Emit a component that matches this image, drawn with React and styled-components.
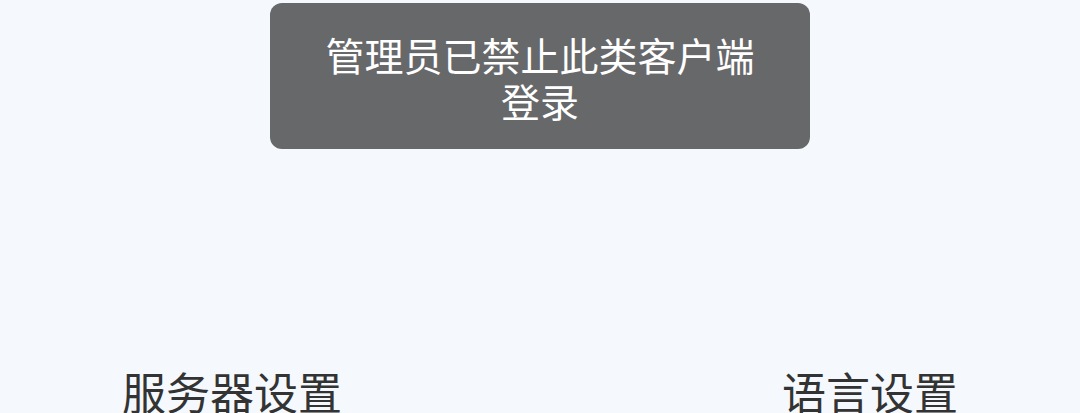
import styled, { createGlobalStyle } from 'styled-components';

const GlobalStyle = createGlobalStyle`
  html, body {
    margin: 0;
    padding: 0;
    background: #f5f9fd;
    font-family: 'Noto Sans CJK SC', 'Noto Sans', sans-serif;
  }
`;

const Page = styled.div`
  position: relative;
  height: 413px;
  overflow: hidden;
  display: flex;
  flex-direction: column;
  justify-content: flex-end;
  background: #f5f9fd;
`;

const Toast = styled.div`
  position: absolute;
  top: 3px;
  left: 270px;
  width: 540px;
  height: 146px;
  box-sizing: border-box;
  padding: 28px 50px;
  border-radius: 12px;
  background: #67686a;
  color: #ffffff;
  font-size: 39px;
  line-height: 46px;
  text-align: center;
`;

const Footer = styled.div`
  display: flex;
  justify-content: space-between;
  padding: 0 122px;
  margin-bottom: -6px;
`;

const FooterLink = styled.span`
  font-size: 44px;
  line-height: 56px;
  color: #333333;
`;

const App = () => (
  <Page>
    <GlobalStyle />
    <Footer>
      <FooterLink>服务器设置</FooterLink>
      <FooterLink>语言设置</FooterLink>
    </Footer>
    <Toast>管理员已禁止此类客户端登录</Toast>
  </Page>
);

export default App;
